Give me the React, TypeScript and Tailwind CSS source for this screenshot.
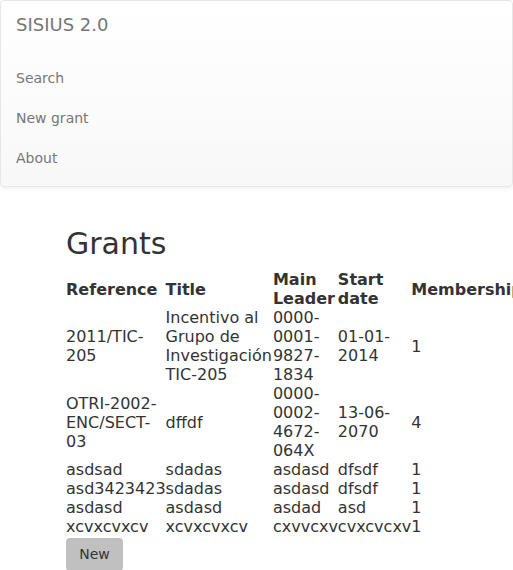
import React from "react";

const links = ["Search", "New grant", "About"];

const grants = [
  { ref: "2011/TIC-205", title: "Incentivo al Grupo de Investigación TIC-205", leader: "0000-0001-9827-1834", start: "01-01-2014", members: "1" },
  { ref: "OTRI-2002-ENC/SECT-03", title: "dffdf", leader: "0000-0002-4672-064X", start: "13-06-2070", members: "4" },
  { ref: "asdsad", title: "sdadas", leader: "asdasd", start: "dfsdf", members: "1" },
  { ref: "asd3423423", title: "sdadas", leader: "asdasd", start: "dfsdf", members: "1" },
  { ref: "asdasd", title: "asdasd", leader: "asdad", start: "asd", members: "1" },
  { ref: "xcvxcvxcv", title: "xcvxcvxcv", leader: "cxvvcxv", start: "cvxcvcxv", members: "1" },
];

const headers = ["Reference", "Title", "Main Leader", "Start date", "Membership"];

export default function App() {
  return (
    <div className="w-[513px] h-[570px] overflow-hidden bg-white text-[14px] leading-[20px] text-[#333] [font-family:'DejaVu_Sans',sans-serif]">
      {/* Navbar (collapsed, mobile) */}
      <nav className="rounded-[4px] border border-[#e7e7e7] bg-gradient-to-b from-white to-[#f8f8f8] shadow-[0_1px_5px_rgba(0,0,0,0.075)]">
        <div className="h-[50px] px-[15px] pt-[14px] pb-[16px] text-[18px] leading-[20px] text-[#777]">SISIUS 2.0</div>
        <ul className="pt-[6.5px] pb-[8.5px]">
          {links.map((l) => (
            <li key={l}>
              <a className="block px-[15px] py-[10px] leading-[20px] text-[#777]">{l}</a>
            </li>
          ))}
        </ul>
      </nav>

      <main className="pl-[66px] pt-[20px]">
        <h2 className="mt-[20px] mb-[10px] text-[30px] leading-[33px] font-normal">Grants</h2>
        <table className="w-0 border-collapse text-[16px] leading-[19px]">
          <thead>
            <tr>
              {headers.map((h, i) => (
                <th key={h} className={`p-0 text-left align-middle font-bold ${i === 1 ? "pr-px" : ""}`}>
                  {h}
                </th>
              ))}
            </tr>
          </thead>
          <tbody>
            {grants.map((g, i) => (
              <tr key={i}>
                <td className="p-0 align-middle">{g.ref}</td>
                <td className="p-0 pr-px align-middle">{g.title}</td>
                <td className="p-0 align-middle">{g.leader}</td>
                <td className="p-0 align-middle">{g.start}</td>
                <td className="p-0 align-middle">{g.members}</td>
              </tr>
            ))}
          </tbody>
        </table>
        <button className="mt-[1.5px] h-[33px] w-[57px] rounded-[4px] bg-[#c0c0c0] text-[14px] text-[#333]">New</button>
      </main>
    </div>
  );
}
